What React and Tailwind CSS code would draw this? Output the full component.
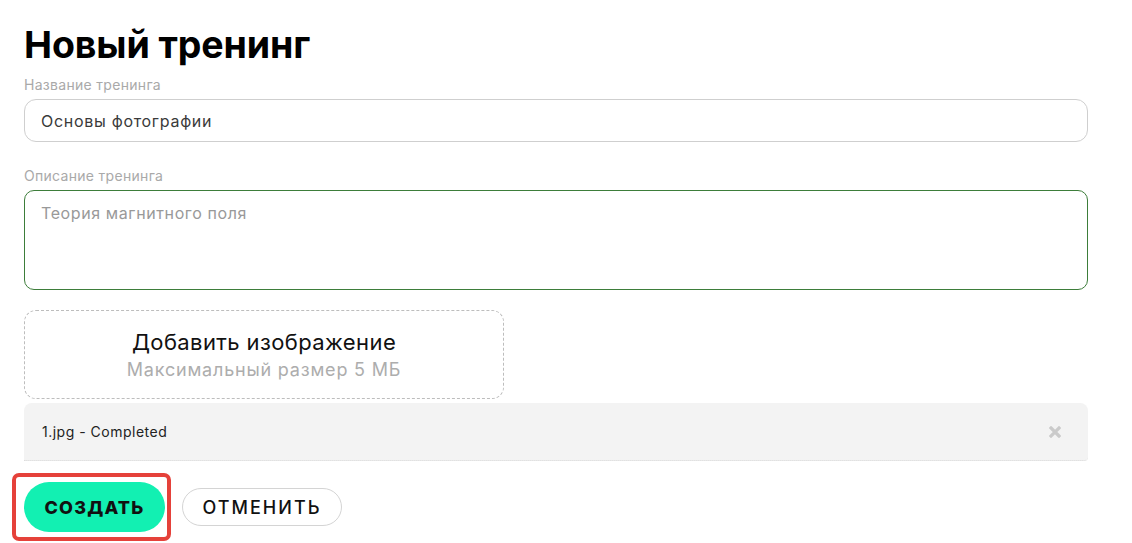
function Field({ label, children }) {
    return (
        <div className="flex flex-col">
            <label className="mb-[6px] text-[14px] leading-[16px] tracking-[0.3px] text-[#a9a9a9]">{label}</label>
            {children}
        </div>
    );
}

function CloseMark() {
    return (
        <svg width="12" height="12" viewBox="0 0 12 12" className="text-[#cacaca]">
            <path d="M2 2L10 10M10 2L2 10" stroke="currentColor" strokeWidth="3.2" strokeLinecap="square" />
        </svg>
    );
}

export default function App() {
    return (
        <main className="min-h-[543px] bg-white px-6 pt-[22px] text-black font-['Inter','Noto_Sans',sans-serif]">
            <h1 className="text-[37.5px] leading-[46px] font-bold tracking-[-0.1px] text-black">Новый тренинг</h1>

            <div className="mt-[9px] mr-[20px]">
                <Field label="Название тренинга">
                    <input
                        defaultValue="Основы фотографии"
                        className="h-[43px] w-full rounded-[12px] border border-[#cfcfcf] px-4 text-[16px] tracking-[0.7px] text-[#3a3a3a] outline-none"
                    />
                </Field>

                <div className="mt-[26px]">
                    <Field label="Описание тренинга">
                        <textarea
                            placeholder="Теория магнитного поля"
                            className="h-[100px] w-full resize-none rounded-[10px] border border-[#3d7d3a] px-4 pt-[10px] text-[16px] tracking-[0.6px] text-[#3a3a3a] placeholder:text-[#999] outline-none"
                        />
                    </Field>
                </div>

                {/* upload zone */}
                <div className="mt-[20px] flex h-[89px] w-[480px] flex-col items-center justify-center rounded-[12px] border border-dashed border-[#bdbdbd]">
                    <span className="text-[22px] leading-[28px] tracking-[0.4px] text-[#111]">Добавить изображение</span>
                    <span className="mt-[3px] text-[18px] leading-[22px] tracking-[0.8px] text-[#adadad]">Максимальный размер 5 МБ</span>
                </div>

                <div className="mt-[4px] flex h-[58px] items-center justify-between rounded-t-[8px] rounded-br-[4px] border-b border-dotted border-[#d6d6d6] bg-[#f3f3f3] pl-[18px] pr-[27px]">
                    <span className="text-[14px] tracking-[0.5px] text-[#222]">1.jpg - Completed</span>
                    <CloseMark />
                </div>
            </div>

            <div className="mt-[12px] flex items-center">
                <div className="-ml-3 rounded-[7px] border-4 border-[#e5413a] py-[5px] pl-[8px] pr-[2px]">
                    <button className="h-[50px] w-[141px] rounded-full bg-[#12f0b2] text-[18px] font-extrabold tracking-[1.2px] text-[#111]">
                        СОЗДАТЬ
                    </button>
                </div>
                <button className="ml-[11px] h-[38px] w-[160px] rounded-full border border-[#d4d4d4] text-[18px] font-medium tracking-[2px] text-[#111]">
                    ОТМЕНИТЬ
                </button>
            </div>
        </main>
    );
}
